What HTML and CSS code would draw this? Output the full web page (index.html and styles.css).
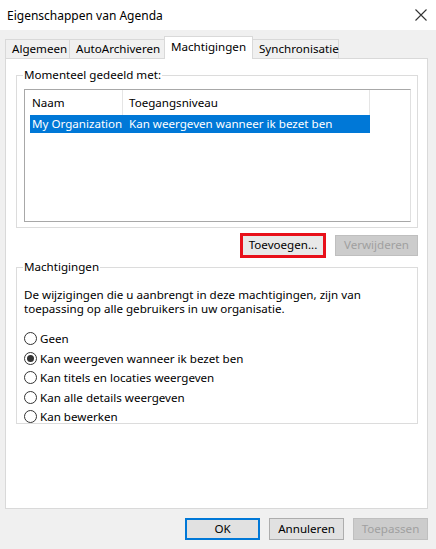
FILE: index.html
```html
<!DOCTYPE html>
<html lang="nl">
<head>
<meta charset="utf-8">
<title>Eigenschappen van Agenda</title>
<link rel="stylesheet" href="styles.css">
</head>
<body>
<div class="dialog">
  <div class="titlebar">
    <span class="title">Eigenschappen van Agenda</span>
    <svg class="close" width="12" height="12" viewBox="0 0 12 12"><path d="M0.5 0.5 L11.5 11.5 M11.5 0.5 L0.5 11.5" stroke="#333" stroke-width="1.1" fill="none"/></svg>
  </div>
  <div class="content">
    <div class="tabs">
      <div class="tab">Algemeen</div>
      <div class="tab">AutoArchiveren</div>
      <div class="tab active">Machtigingen</div>
      <div class="tab">Synchronisatie</div>
    </div>
    <div class="panel">
      <div class="group group-shared">
        <span class="group-label">Momenteel gedeeld met:</span>
        <div class="listview">
          <div class="lv-header">
            <div class="col col-name">Naam</div>
            <div class="col col-level">Toegangsniveau</div>
          </div>
          <div class="lv-row selected">
            <div class="col col-name">My Organization</div>
            <div class="col col-level">Kan weergeven wanneer ik bezet ben</div>
          </div>
        </div>
      </div>
      <div class="btnrow">
        <div class="highlight"><button class="btn">Toevoegen...</button></div>
        <button class="btn disabled">Verwijderen</button>
      </div>
      <div class="group group-perm">
        <span class="group-label">Machtigingen</span>
        <p class="desc">De wijzigingen die u aanbrengt in deze machtigingen, zijn van toepassing op alle gebruikers in uw organisatie.</p>
        <div class="radios">
          <div class="radio"><span class="circle"></span>Geen</div>
          <div class="radio"><span class="circle checked"></span>Kan weergeven wanneer ik bezet ben</div>
          <div class="radio"><span class="circle"></span>Kan titels en locaties weergeven</div>
          <div class="radio"><span class="circle"></span>Kan alle details weergeven</div>
          <div class="radio"><span class="circle"></span>Kan bewerken</div>
        </div>
      </div>
    </div>
    <div class="footer">
      <button class="btn btn-foot default">OK</button>
      <button class="btn btn-foot">Annuleren</button>
      <button class="btn btn-foot disabled">Toepassen</button>
    </div>
  </div>
</div>
</body>
</html>
```
FILE: styles.css
```css
* { box-sizing: border-box; }
html, body { margin: 0; padding: 0; }
body {
  width: 436px;
  height: 549px;
  background: #f0f0f0;
  font-family: "Noto Sans", "Open Sans", sans-serif;
  font-size: 11.6px;
  color: #000;
  overflow: hidden;
}
.titlebar {
  height: 30px;
  background: #fff;
  display: flex;
  align-items: center;
  justify-content: space-between;
  padding: 0 9px 0 7px;
}
.title { font-size: 12px; color: #000; }
.content { padding: 0 8px 0 5px; }
.tabs {
  display: flex;
  height: 28px;
  align-items: flex-end;
}
.tab {
  height: 19px;
  line-height: 17px;
  padding: 0 6px;
  border: 1px solid #d9d9d9;
  border-bottom: none;
  margin-right: -1px;
  background: #f0f0f0;
  white-space: nowrap;
}
.tab:first-child { width: 65px; }
.tab:nth-child(2) { width: 96px; }
.tab.active {
  line-height: 19px;
  background: #fff;
  width: 89px;
  position: relative;
  z-index: 1;
  margin-bottom: -1px;
  height: 23px;
}
.tab:nth-child(4) { width: 87px; }
.panel {
  background: #fff;
  border: 1px solid #d9d9d9;
  height: 451px;
  padding: 16px 9px 0 10px;
}
.group {
  position: relative;
  border: 1px solid #dcdcdc;
}
.group-label {
  position: absolute;
  top: -9px;
  left: 6px;
  padding: 0 1px;
  background: #fff;
  line-height: 16px;
}
.group-shared {
  height: 153px;
  padding: 13px 6px 0 7px;
}
.listview {
  height: 133px;
  border: 1px solid #a8a8a8;
  border-right-color: #e0e0e0;
  padding: 0 0 0 5px;
}
.lv-header {
  display: flex;
  height: 25px;
  align-items: center;
}
.lv-header .col { border-right: 1px solid #e5e5e5; height: 25px; line-height: 25px; }
.col { padding-left: 2px; white-space: nowrap; }
.col-name { width: 93px; }
.col-level { width: 247px; padding-left: 6px; }
.lv-row {
  display: flex;
  height: 18px;
  line-height: 18px;
}
.selected { background: #0078d7; color: #fff; width: 340px; }
.btnrow {
  display: flex;
  justify-content: flex-end;
  align-items: center;
  gap: 9px;
  margin-top: 4px;
  height: 26px;
}
.highlight {
  border: 3px solid #e8101a;
  background: #fff;
  height: 25px;
  display: flex;
  align-items: center;
}
.btn {
  font-family: inherit;
  font-size: 11.6px;
  color: #000;
  background: #e1e1e1;
  border: 1px solid #adadad;
  height: 21px;
  padding: 0;
  margin: 0;
  line-height: 18px;
}
.highlight .btn {
  width: 80px;
  height: 19px;
  border: none;
  background: #e8e8e8;
}
.btnrow > .btn { width: 83px; }
.btn.disabled { background: #cccccc; border-color: #bfbfbf; color: #a0a0a0; }
.group-perm {
  margin-top: 9px;
  height: 157px;
  padding: 20px 6px 0 7px;
}
.desc {
  margin: 0;
  line-height: 14px;
  width: 360px;
}
.radios { margin-top: 13px; }
.radio {
  display: flex;
  align-items: center;
  height: 19.5px;
}
.circle {
  width: 13px;
  height: 13px;
  border: 1px solid #333;
  border-radius: 50%;
  margin-right: 3px;
  background: #fff;
  display: flex;
  align-items: center;
  justify-content: center;
}
.circle.checked::after {
  content: "";
  width: 7px;
  height: 7px;
  border-radius: 50%;
  background: #333;
}
.footer {
  display: flex;
  justify-content: flex-end;
  gap: 9px;
  margin-top: 9px;
}
.btn-foot { width: 75px; height: 22px; }
.btn.default { border: 1px solid #0078d7; box-shadow: inset 0 0 0 1px #0078d7; }
```
